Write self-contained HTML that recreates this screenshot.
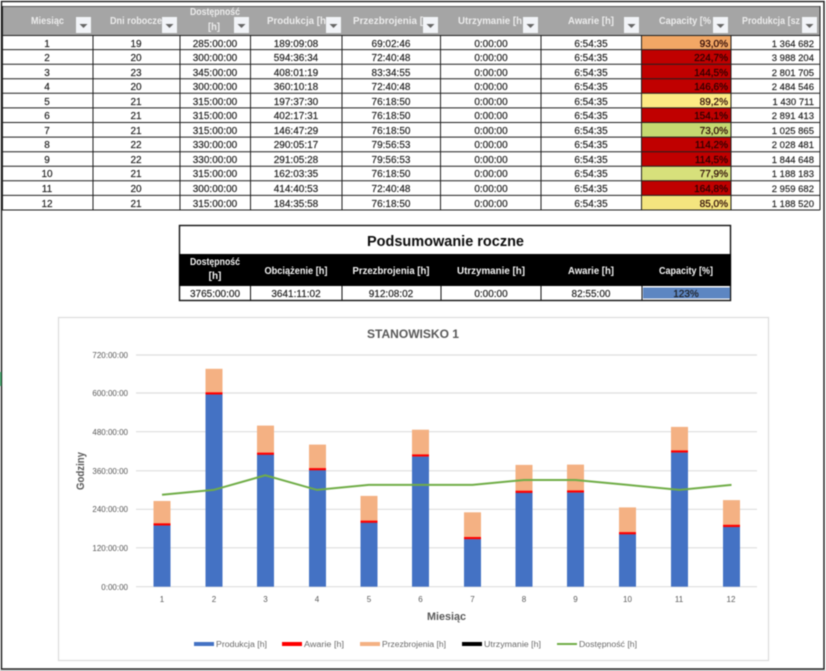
<!DOCTYPE html>
<html><head><meta charset="utf-8"><style>
html,body{margin:0;padding:0;background:#fff;width:826px;height:671px;overflow:hidden}
svg{display:block;filter:blur(.45px)}
text{font-family:"Liberation Sans",sans-serif}
.h{font-size:10px;font-weight:bold;fill:#ececec;text-anchor:middle}
.c{font-size:10px;fill:#1a1a1a;stroke:#1a1a1a;stroke-width:.15;text-anchor:middle}
.r{font-size:9.500px;fill:#1a1a1a;stroke:#1a1a1a;stroke-width:.15;text-anchor:end}
.k{font-size:10px;fill:#260000;stroke:#260000;stroke-width:.2;text-anchor:end}
.s{font-size:10px;font-weight:bold;fill:#f4f4f4;text-anchor:middle}
.y{font-size:8px;fill:#595959;text-anchor:end}
.x{font-size:8px;fill:#595959;text-anchor:middle}
.l{font-size:8px;fill:#6a6a6a}
</style></head><body>
<svg width="826" height="671" viewBox="0 0 826 671" xmlns="http://www.w3.org/2000/svg">
<rect x="0" y="0" width="826" height="671" fill="#fff"/>
<rect x="1.500" y="1.500" width="822.500" height="667.500" fill="#fff" stroke="#1a1a1a" stroke-width="1.400"/>
<rect x="0" y="670" width="826" height="1" fill="#bdbdbd"/>
<rect x="0" y="372" width="1.500" height="14" fill="#1e8a4a"/>

<!-- main table header -->
<rect x="2" y="6" width="818" height="29" fill="#a5a5a5"/>
<rect x="2" y="6" width="818" height="1" fill="#555"/>
<text class="h" x="47.500" y="24" textLength="33" lengthAdjust="spacingAndGlyphs">Miesiąc</text>
<text class="h" x="136" y="24" textLength="52" lengthAdjust="spacingAndGlyphs">Dni robocze</text>
<text class="h" x="215" y="15" textLength="50" lengthAdjust="spacingAndGlyphs">Dostępność</text>
<text class="h" x="214" y="30" textLength="12" lengthAdjust="spacingAndGlyphs">[h]</text>
<text class="h" x="296.500" y="24" textLength="59" lengthAdjust="spacingAndGlyphs">Produkcja [h</text>
<text class="h" x="388" y="24" textLength="70" lengthAdjust="spacingAndGlyphs">Przezbrojenia [</text>
<text class="h" x="490" y="24" textLength="64" lengthAdjust="spacingAndGlyphs">Utrzymanie [h</text>
<text class="h" x="591" y="24" textLength="46" lengthAdjust="spacingAndGlyphs">Awarie [h]</text>
<text class="h" x="685" y="24" textLength="52" lengthAdjust="spacingAndGlyphs">Capacity [%</text>
<text class="h" x="771" y="24" textLength="58" lengthAdjust="spacingAndGlyphs">Produkcja [sz</text>

<!-- filter buttons -->
<g fill="#f2f4f8">
<rect x="76" y="17" width="15" height="16"/><rect x="162" y="17" width="15" height="16"/><rect x="234" y="17" width="15" height="16"/><rect x="326" y="17" width="15" height="16"/><rect x="423" y="17" width="15" height="16"/><rect x="523" y="17" width="15" height="16"/><rect x="624" y="17" width="15" height="16"/><rect x="713" y="17" width="15" height="16"/><rect x="802" y="17" width="15" height="16"/>
</g>
<g fill="#666">
<path d="M79.500 24h8l-4 4z"/><path d="M165.500 24h8l-4 4z"/><path d="M237.500 24h8l-4 4z"/><path d="M329.500 24h8l-4 4z"/><path d="M426.500 24h8l-4 4z"/><path d="M526.500 24h8l-4 4z"/><path d="M627.500 24h8l-4 4z"/><path d="M716.500 24h8l-4 4z"/><path d="M805.500 24h8l-4 4z"/>
</g>

<!-- capacity fills -->
<rect x="642" y="35" width="89" height="14.600" fill="#f2a765"/>
<rect x="642" y="49.600" width="89" height="14.600" fill="#c00000"/>
<rect x="642" y="64.200" width="89" height="14.500" fill="#c00000"/>
<rect x="642" y="78.700" width="89" height="14.600" fill="#c00000"/>
<rect x="642" y="93.300" width="89" height="14.600" fill="#fdeb84"/>
<rect x="642" y="107.900" width="89" height="14.600" fill="#c00000"/>
<rect x="642" y="122.500" width="89" height="14.600" fill="#c5d971"/>
<rect x="642" y="137.100" width="89" height="14.600" fill="#c00000"/>
<rect x="642" y="151.700" width="89" height="14.500" fill="#c00000"/>
<rect x="642" y="166.200" width="89" height="14.600" fill="#d7e07b"/>
<rect x="642" y="180.800" width="89" height="14.600" fill="#c00000"/>
<rect x="642" y="195.400" width="89" height="14.600" fill="#f4e57f"/>

<!-- grid -->
<g stroke="#1f1f1f" stroke-width="1" fill="none">
<path d="M2 35.500H820M2 49.600H820M2 64.200H820M2 78.700H820M2 93.300H820M2 107.900H820M2 122.500H820M2 137.100H820M2 151.700H820M2 166.200H820M2 180.800H820M2 195.400H820M2 210H820"/>
<path d="M2.500 6V210M93 35V210M180 35V210M250.500 35V210M342 35V210M440.500 35V210M541 35V210M641.500 35V210M731 35V210M820 6V210"/>
</g>

<!-- rows -->
<g class="rows">
<text class="c" x="47" y="47">1</text><text class="c" x="136" y="47">19</text><text class="c" x="215" y="47">285:00:00</text><text class="c" x="296" y="47">189:09:08</text><text class="c" x="391" y="47">69:02:46</text><text class="c" x="491" y="47">0:00:00</text><text class="c" x="591" y="47">6:54:35</text><text class="k" x="728" y="47">93,0%</text><text class="r" x="814" y="47">1 364 682</text>
<text class="c" x="47" y="61">2</text><text class="c" x="136" y="61">20</text><text class="c" x="215" y="61">300:00:00</text><text class="c" x="296" y="61">594:36:34</text><text class="c" x="391" y="61">72:40:48</text><text class="c" x="491" y="61">0:00:00</text><text class="c" x="591" y="61">6:54:35</text><text class="k" x="728" y="61">224,7%</text><text class="r" x="814" y="61">3 988 204</text>
<text class="c" x="47" y="76">3</text><text class="c" x="136" y="76">23</text><text class="c" x="215" y="76">345:00:00</text><text class="c" x="296" y="76">408:01:19</text><text class="c" x="391" y="76">83:34:55</text><text class="c" x="491" y="76">0:00:00</text><text class="c" x="591" y="76">6:54:35</text><text class="k" x="728" y="76">144,5%</text><text class="r" x="814" y="76">2 801 705</text>
<text class="c" x="47" y="90">4</text><text class="c" x="136" y="90">20</text><text class="c" x="215" y="90">300:00:00</text><text class="c" x="296" y="90">360:10:18</text><text class="c" x="391" y="90">72:40:48</text><text class="c" x="491" y="90">0:00:00</text><text class="c" x="591" y="90">6:54:35</text><text class="k" x="728" y="90">146,6%</text><text class="r" x="814" y="90">2 484 546</text>
<text class="c" x="47" y="105">5</text><text class="c" x="136" y="105">21</text><text class="c" x="215" y="105">315:00:00</text><text class="c" x="296" y="105">197:37:30</text><text class="c" x="391" y="105">76:18:50</text><text class="c" x="491" y="105">0:00:00</text><text class="c" x="591" y="105">6:54:35</text><text class="k" x="728" y="105">89,2%</text><text class="r" x="814" y="105">1 430 711</text>
<text class="c" x="47" y="119">6</text><text class="c" x="136" y="119">21</text><text class="c" x="215" y="119">315:00:00</text><text class="c" x="296" y="119">402:17:31</text><text class="c" x="391" y="119">76:18:50</text><text class="c" x="491" y="119">0:00:00</text><text class="c" x="591" y="119">6:54:35</text><text class="k" x="728" y="119">154,1%</text><text class="r" x="814" y="119">2 891 413</text>
<text class="c" x="47" y="134">7</text><text class="c" x="136" y="134">21</text><text class="c" x="215" y="134">315:00:00</text><text class="c" x="296" y="134">146:47:29</text><text class="c" x="391" y="134">76:18:50</text><text class="c" x="491" y="134">0:00:00</text><text class="c" x="591" y="134">6:54:35</text><text class="k" x="728" y="134">73,0%</text><text class="r" x="814" y="134">1 025 865</text>
<text class="c" x="47" y="148">8</text><text class="c" x="136" y="148">22</text><text class="c" x="215" y="148">330:00:00</text><text class="c" x="296" y="148">290:05:17</text><text class="c" x="391" y="148">79:56:53</text><text class="c" x="491" y="148">0:00:00</text><text class="c" x="591" y="148">6:54:35</text><text class="k" x="728" y="148">114,2%</text><text class="r" x="814" y="148">2 028 481</text>
<text class="c" x="47" y="163">9</text><text class="c" x="136" y="163">22</text><text class="c" x="215" y="163">330:00:00</text><text class="c" x="296" y="163">291:05:28</text><text class="c" x="391" y="163">79:56:53</text><text class="c" x="491" y="163">0:00:00</text><text class="c" x="591" y="163">6:54:35</text><text class="k" x="728" y="163">114,5%</text><text class="r" x="814" y="163">1 844 648</text>
<text class="c" x="47" y="177">10</text><text class="c" x="136" y="177">21</text><text class="c" x="215" y="177">315:00:00</text><text class="c" x="296" y="177">162:03:35</text><text class="c" x="391" y="177">76:18:50</text><text class="c" x="491" y="177">0:00:00</text><text class="c" x="591" y="177">6:54:35</text><text class="k" x="728" y="177">77,9%</text><text class="r" x="814" y="177">1 188 183</text>
<text class="c" x="47" y="192">11</text><text class="c" x="136" y="192">20</text><text class="c" x="215" y="192">300:00:00</text><text class="c" x="296" y="192">414:40:53</text><text class="c" x="391" y="192">72:40:48</text><text class="c" x="491" y="192">0:00:00</text><text class="c" x="591" y="192">6:54:35</text><text class="k" x="728" y="192">164,8%</text><text class="r" x="814" y="192">2 959 682</text>
<text class="c" x="47" y="207">12</text><text class="c" x="136" y="207">21</text><text class="c" x="215" y="207">315:00:00</text><text class="c" x="296" y="207">184:35:58</text><text class="c" x="391" y="207">76:18:50</text><text class="c" x="491" y="207">0:00:00</text><text class="c" x="591" y="207">6:54:35</text><text class="k" x="728" y="207">85,0%</text><text class="r" x="814" y="207">1 188 520</text>
</g>

<!-- summary -->
<rect x="179.500" y="225.500" width="551" height="75" fill="#fff" stroke="#111" stroke-width="1.400"/>
<rect x="179" y="254" width="552" height="32" fill="#000"/>
<text x="445.500" y="246" text-anchor="middle" font-size="15" font-weight="bold" fill="#0d0d0d" textLength="157" lengthAdjust="spacingAndGlyphs">Podsumowanie roczne</text>
<text class="s" x="215" y="265" textLength="50" lengthAdjust="spacingAndGlyphs">Dostępność</text>
<text class="s" x="215" y="279">[h]</text>
<text class="s" x="296" y="274" textLength="63" lengthAdjust="spacingAndGlyphs">Obciążenie [h]</text>
<text class="s" x="391" y="274" textLength="77" lengthAdjust="spacingAndGlyphs">Przezbrojenia [h]</text>
<text class="s" x="491" y="274" textLength="68" lengthAdjust="spacingAndGlyphs">Utrzymanie [h]</text>
<text class="s" x="591" y="274" textLength="46" lengthAdjust="spacingAndGlyphs">Awarie [h]</text>
<text class="s" x="686" y="274" textLength="54" lengthAdjust="spacingAndGlyphs">Capacity [%]</text>
<rect x="643" y="287.500" width="87" height="11" fill="#5d86c2"/>
<path d="M250.500 286V300M342 286V300M441 286V300M541 286V300M642 286V300" stroke="#111" stroke-width="1"/>
<text class="c" x="215" y="297">3765:00:00</text><text class="c" x="296" y="297">3641:11:02</text><text class="c" x="391" y="297">912:08:02</text><text class="c" x="491" y="297">0:00:00</text><text class="c" x="591" y="297">82:55:00</text><text class="c" x="686" y="297">123%</text>

<!-- chart -->
<rect x="58.500" y="317.500" width="710" height="343" fill="#fff" stroke="#dcdcdc" stroke-width="1.200"/>
<text x="413" y="338" text-anchor="middle" font-size="12" font-weight="bold" fill="#595959" textLength="92" lengthAdjust="spacingAndGlyphs">STANOWISKO 1</text>
<path d="M136 355H757M136 393H757M136 431.700H757M136 470.800H757M136 509.300H757M136 547.800H757M136 586.700H757" stroke="#dedede" stroke-width="1.200" fill="none"/>
<text class="y" x="128" y="358">720:00:00</text><text class="y" x="128" y="396">600:00:00</text><text class="y" x="128" y="435">480:00:00</text><text class="y" x="128" y="474">360:00:00</text><text class="y" x="128" y="512">240:00:00</text><text class="y" x="128" y="551">120:00:00</text><text class="y" x="128" y="590">0:00:00</text>
<!-- peach -->
<g fill="#f4b183">
<rect x="153.500" y="501" width="17" height="22.500"/><rect x="205.500" y="368.800" width="17" height="23.700"/><rect x="257" y="425.600" width="17" height="27"/><rect x="309" y="444.600" width="17" height="23.700"/><rect x="360.500" y="495.900" width="17" height="25"/><rect x="412" y="429.700" width="17" height="25"/><rect x="464" y="512.300" width="17" height="25"/><rect x="515.500" y="464.900" width="17" height="26"/><rect x="567" y="464.600" width="17" height="26"/><rect x="619" y="507.400" width="17" height="25"/><rect x="671" y="426.900" width="17" height="23.700"/><rect x="723" y="500.100" width="17" height="25"/>
</g>
<!-- red -->
<g fill="#ff0000">
<rect x="153.500" y="523.300" width="17" height="2.400"/><rect x="205.500" y="392.300" width="17" height="2.400"/><rect x="257" y="452.600" width="17" height="2.400"/><rect x="309" y="468.100" width="17" height="2.400"/><rect x="360.500" y="520.600" width="17" height="2.400"/><rect x="412" y="454.400" width="17" height="2.400"/><rect x="464" y="537" width="17" height="2.400"/><rect x="515.500" y="490.700" width="17" height="2.400"/><rect x="567" y="490.400" width="17" height="2.400"/><rect x="619" y="532.100" width="17" height="2.400"/><rect x="671" y="450.400" width="17" height="2.400"/><rect x="723" y="524.800" width="17" height="2.400"/>
</g>
<!-- blue -->
<g fill="#4472c4">
<rect x="153.500" y="525.500" width="17" height="61.200"/><rect x="205.500" y="394.500" width="17" height="192.200"/><rect x="257" y="454.800" width="17" height="131.900"/><rect x="309" y="470.300" width="17" height="116.400"/><rect x="360.500" y="522.800" width="17" height="63.900"/><rect x="412" y="456.600" width="17" height="130.100"/><rect x="464" y="539.200" width="17" height="47.500"/><rect x="515.500" y="492.900" width="17" height="93.800"/><rect x="567" y="492.600" width="17" height="94.100"/><rect x="619" y="534.300" width="17" height="52.400"/><rect x="671" y="452.600" width="17" height="134.100"/><rect x="723" y="527" width="17" height="59.700"/>
</g>
<polyline points="162,494.800 213.600,489.900 265.300,475.300 317,489.900 368.700,484.900 420.500,484.900 472.500,484.900 524,480 575.500,480 627.500,484.900 679.500,489.900 731.500,484.900" fill="none" stroke="#70ad47" stroke-width="2"/>
<g class="xl">
<text class="x" x="162" y="602">1</text><text class="x" x="214" y="602">2</text><text class="x" x="265.500" y="602">3</text><text class="x" x="317" y="602">4</text><text class="x" x="369" y="602">5</text><text class="x" x="420.500" y="602">6</text><text class="x" x="472.500" y="602">7</text><text class="x" x="524" y="602">8</text><text class="x" x="575.500" y="602">9</text><text class="x" x="627.500" y="602">10</text><text class="x" x="679" y="602">11</text><text class="x" x="731" y="602">12</text>
</g>
<text x="446.500" y="620" text-anchor="middle" font-size="11" font-weight="bold" fill="#595959" textLength="39" lengthAdjust="spacingAndGlyphs">Miesiąc</text>
<text transform="translate(84 471) rotate(-90)" text-anchor="middle" font-size="11" font-weight="bold" fill="#595959" textLength="38" lengthAdjust="spacingAndGlyphs">Godziny</text>
<!-- legend -->
<rect x="194" y="642" width="20" height="4" fill="#4472c4"/><text class="l" x="216" y="647" textLength="51" lengthAdjust="spacingAndGlyphs">Produkcja [h]</text>
<rect x="282" y="642" width="20" height="4" fill="#ff0000"/><text class="l" x="304" y="647" textLength="40" lengthAdjust="spacingAndGlyphs">Awarie [h]</text>
<rect x="360" y="642" width="20" height="4" fill="#f4b183"/><text class="l" x="382" y="647" textLength="64" lengthAdjust="spacingAndGlyphs">Przezbrojenia [h]</text>
<rect x="462" y="642" width="20" height="4" fill="#000"/><text class="l" x="484" y="647" textLength="57" lengthAdjust="spacingAndGlyphs">Utrzymanie [h]</text>
<rect x="557" y="643" width="20" height="2" fill="#70ad47"/><text class="l" x="579" y="647" textLength="58" lengthAdjust="spacingAndGlyphs">Dostępność [h]</text>
</svg>
</body></html>
